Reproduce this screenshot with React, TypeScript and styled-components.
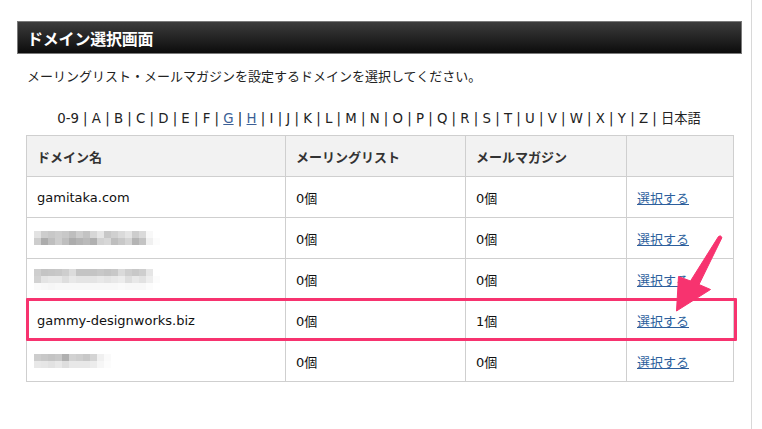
import React from "react";
import styled, { createGlobalStyle } from "styled-components";

const Global = createGlobalStyle`
  html, body { margin: 0; padding: 0; background: #fff; }
  body { font-family: "DejaVu Sans", "Noto Sans CJK JP", sans-serif; color: #222; }
`;

const Page = styled.div`
  position: relative;
  width: 752px;
  height: 429px;
  border-right: 1px solid #d8d8d8;
  box-sizing: border-box;
  padding: 21px 0 0 17px;
`;

const TitleBar = styled.div`
  width: 725px;
  height: 33px;
  box-sizing: border-box;
  border: 1px solid #7a7a7a;
  background: linear-gradient(#3c3c3c, #0c0c0c);
  display: flex;
  align-items: center;
  padding-left: 9px;
`;

const Title = styled.h1`
  margin: 0;
  font-size: 16px;
  font-weight: bold;
  color: #fff;
  letter-spacing: -0.2px;
`;

const Body = styled.div`
  padding-left: 9px;
`;

const Lead = styled.p`
  margin: 15px 0 0 1px;
  font-size: 13px;
  line-height: 16px;
  color: #222;
`;

const AlphaNav = styled.div`
  width: 706px;
  margin-top: 26px;
  text-align: center;
  font-size: 13.3px;
  line-height: 16px;
  color: #222;
`;

const NavLink = styled.a`
  color: #3b5f96;
  text-decoration: underline;
`;

const Table = styled.table`
  margin-top: 8px;
  width: 707px;
  border-collapse: collapse;
  table-layout: fixed;
  font-size: 13px;
`;

const Col = styled.col<{ w: number }>`
  width: ${(p) => p.w}px;
`;

const Th = styled.th`
  background: #f2f2f2;
  border: 1px solid #cfcfcf;
  height: 40px;
  padding: 0 0 0 10px;
  text-align: left;
  font-weight: bold;
  color: #333;
`;

const Td = styled.td`
  border: 1px solid #cfcfcf;
  height: 40px;
  padding: 0 0 0 10px;
  color: #111;
  vertical-align: middle;
`;

const SelectLink = styled.a`
  color: #2d5f9d;
  text-decoration: underline;
`;

const Highlight = styled.div`
  position: absolute;
  left: 26px;
  top: 298px;
  width: 711px;
  height: 43px;
  box-sizing: border-box;
  border: 3px solid #f7336f;
  border-radius: 1px;
  pointer-events: none;
`;

const Overlay = styled.svg`
  position: absolute;
  left: 0;
  top: 0;
  width: 762px;
  height: 429px;
  pointer-events: none;
`;

const MosaicSvg = styled.svg`
  display: block;
  margin-left: -3px;
`;

const Mosaic: React.FC<{ rows: number[][] }> = ({ rows }) => {
  const s = 7;
  const w = Math.max(...rows.map((r) => r.length)) * s;
  return (
    <MosaicSvg width={w} height={rows.length * s}>
      {rows.map((r, y) =>
        r.map((v, x) => (
          <rect key={`${x}-${y}`} x={x * s} y={y * s} width={s} height={s} fill={`rgb(${v},${v},${v})`} />
        ))
      )}
    </MosaicSvg>
  );
};

const m1 = [
  [226, 205, 200, 205, 200, 190, 205, 195, 215, 230, 200, 208, 218, 228, 205, 218, 248, 255, 255, 255],
  [205, 172, 190, 205, 190, 172, 180, 186, 176, 210, 215, 190, 200, 212, 180, 195, 240, 252, 255, 255],
];
const m2 = [
  [206, 196, 198, 200, 206, 220, 196, 196, 196, 200, 196, 200, 218, 206, 200, 206, 230, 255, 255, 255, 255],
  [210, 228, 232, 232, 222, 232, 228, 228, 228, 232, 228, 232, 236, 222, 232, 226, 238, 252, 255, 255, 255],
  [250, 248, 246, 248, 248, 248, 248, 248, 248, 248, 248, 248, 250, 248, 248, 248, 252, 255, 255, 255, 255],
];
const m3 = [
  [205, 200, 196, 200, 176, 210, 206, 200, 212, 240, 250, 255, 255, 255],
  [232, 230, 226, 232, 222, 232, 232, 232, 236, 246, 252, 255, 255, 255],
];

type Row = { name: React.ReactNode; ml: string; mm: string };

const rows: Row[] = [
  { name: "gamitaka.com", ml: "0個", mm: "0個" },
  { name: <Mosaic rows={m1} />, ml: "0個", mm: "0個" },
  { name: <Mosaic rows={m2} />, ml: "0個", mm: "0個" },
  { name: "gammy-designworks.biz", ml: "0個", mm: "1個" },
  { name: <Mosaic rows={m3} />, ml: "0個", mm: "0個" },
];

const letters = ["0-9", "A", "B", "C", "D", "E", "F", "G", "H", "I", "J", "K", "L", "M", "N", "O", "P", "Q", "R", "S", "T", "U", "V", "W", "X", "Y", "Z"];

export default function App() {
  return (
    <>
      <Global />
      <Page>
        <TitleBar>
          <Title>ドメイン選択画面</Title>
        </TitleBar>
        <Body>
          <Lead>メーリングリスト・メールマガジンを設定するドメインを選択してください。</Lead>
          <AlphaNav>
            {letters.map((l) => (
              <React.Fragment key={l}>
                {l === "G" || l === "H" ? <NavLink>{l}</NavLink> : l}
                {" | "}
              </React.Fragment>
            ))}
            日本語
          </AlphaNav>
          <Table>
            <colgroup>
              <Col w={259} />
              <Col w={180} />
              <Col w={161} />
              <Col w={107} />
            </colgroup>
            <thead>
              <tr>
                <Th>ドメイン名</Th>
                <Th>メーリングリスト</Th>
                <Th>メールマガジン</Th>
                <Th />
              </tr>
            </thead>
            <tbody>
              {rows.map((r, i) => (
                <tr key={i}>
                  <Td>{r.name}</Td>
                  <Td>{r.ml}</Td>
                  <Td>{r.mm}</Td>
                  <Td>
                    <SelectLink>選択する</SelectLink>
                  </Td>
                </tr>
              ))}
            </tbody>
          </Table>
        </Body>
        <Highlight />
        <Overlay viewBox="0 0 762 429">
          <path
            d="M718.5 236.5 Q720.5 234.8 722 237.5 L699 284.5 L710.5 289.5 L676.5 311 L678.5 276.5 L690.5 281 Z"
            fill="#f7336f"
            stroke="#f7336f"
            strokeWidth="1"
            strokeLinejoin="round"
          />
        </Overlay>
      </Page>
    </>
  );
}
